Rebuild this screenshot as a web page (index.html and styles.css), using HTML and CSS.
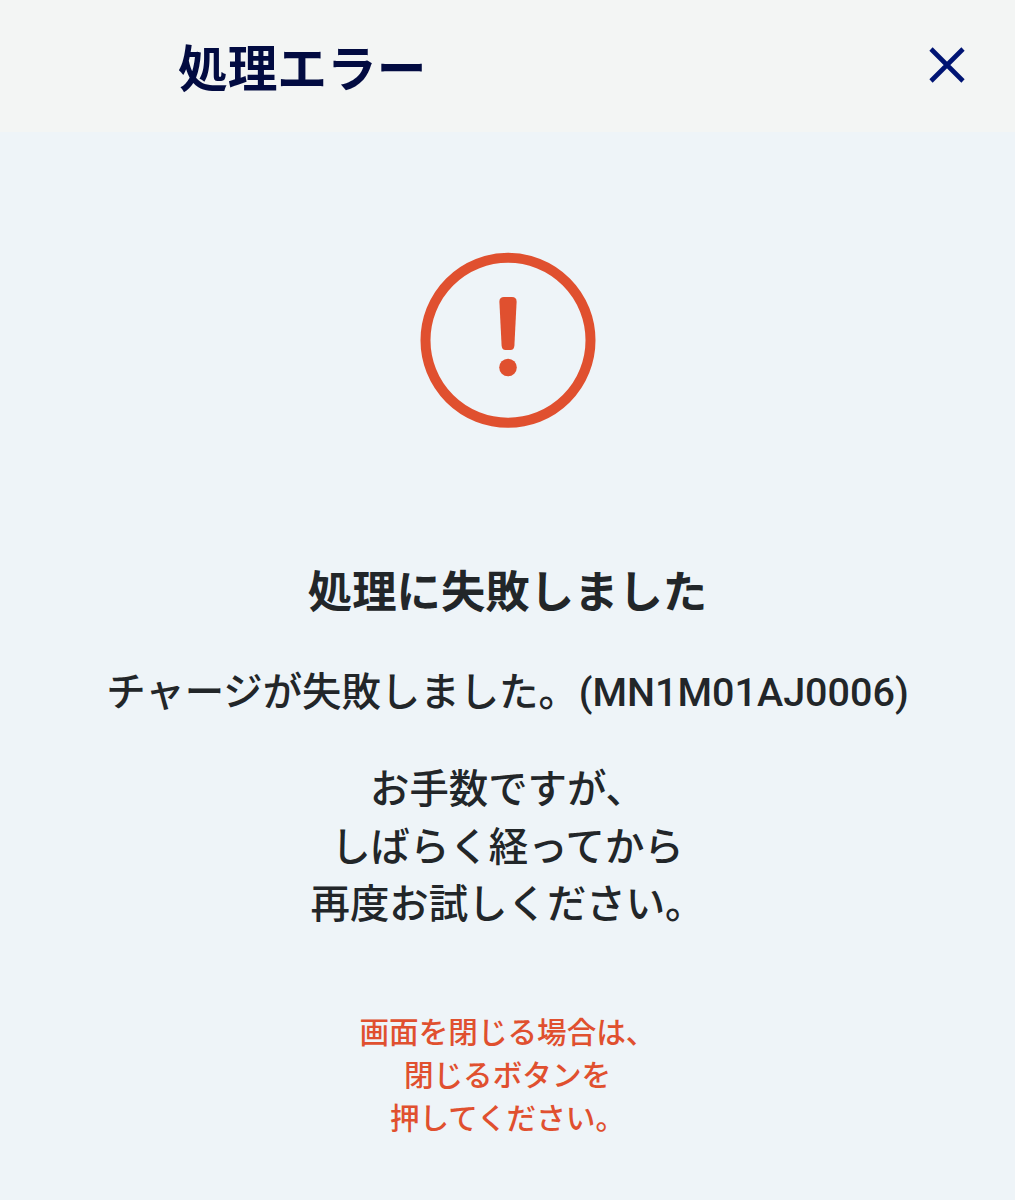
FILE: index.html
```html
<!DOCTYPE html>
<html lang="ja">
  <head>
    <meta charset="UTF-8" />
    <meta name="viewport" content="width=device-width, initial-scale=1.0" />
    <title>処理エラー</title>
    <link rel="stylesheet" href="styles.css">
  </head>
  <body>
    <header class="header">
      <h1 class="header-title">処理エラー</h1>
      <button class="close-btn" aria-label="閉じる">
        <svg class="close-icon" viewBox="0 0 36 36">
          <path d="M2 2 L34 34 M34 2 L2 34" />
        </svg>
      </button>
    </header>
    <main class="content">
      <svg class="error-icon" viewBox="0 0 176 176">
        <circle class="error-ring" cx="88" cy="88.3" r="82.5" />
        <path class="error-mark" d="M84 45 H92 Q96.800 45 96.6 50 L94.4 93.5 Q94 98 90.5 98 H85.5 Q82 98 81.6 93.5 L79.4 50 Q79.2 45 84 45 Z" />
        <circle class="error-mark" cx="88" cy="115.5" r="8.8" />
      </svg>
      <h2 class="error-title">処理に失敗しました</h2>
      <p class="error-detail">チャージが失敗しました。<span class="error-code">(MN1M01AJ0006)</span></p>
      <p class="error-guide">お手数ですが、<br>しばらく経ってから<br>再度お試しください。</p>
      <p class="close-note">画面を閉じる場合は、<br>閉じるボタンを<br>押してください。</p>
    </main>
  </body>
</html>
```
FILE: styles.css
```css
* {
  margin: 0;
  padding: 0;
  box-sizing: border-box;
}
body {
  font-family: Roboto, "Noto Sans CJK JP", sans-serif;
  font-weight: 500;
  background: #eef4f8;
  color: #222629;
  min-height: 100vh;
}
.header {
  display: flex;
  align-items: center;
  justify-content: space-between;
  height: 132px;
  padding: 0 50px 0 178px;
  background: #f3f5f4;
}
.header-title {
  padding-top: 8px;
  font-size: 49.7px;
  font-weight: 700;
  line-height: 72px;
  color: #020b41;
}
.close-btn {
  border: none;
  background: none;
  cursor: pointer;
}
.close-icon {
  display: block;
  width: 36px;
  height: 36px;
  margin-bottom: 2px;
  fill: none;
  stroke: #001473;
  stroke-width: 4.6;
}
.content {
  display: flex;
  flex-direction: column;
  align-items: center;
  padding-top: 120px;
  text-align: center;
}
.error-icon {
  width: 176px;
  height: 176px;
}
.error-ring {
  fill: none;
  stroke: #e0502f;
  stroke-width: 10;
}
.error-mark {
  fill: #e0502f;
}
.error-title {
  margin-top: 132px;
  font-size: 44.4px;
  font-weight: 700;
  line-height: 66px;
}
.error-detail {
  margin-top: 38px;
  font-size: 39.4px;
  line-height: 58px;
}
.error-code {
  margin-left: 1px;
  font-size: 39.5px;
}
.error-guide {
  margin-top: 39px;
  font-size: 39.4px;
  line-height: 57.6px;
}
.close-note {
  margin-top: 78px;
  font-size: 29.6px;
  line-height: 43.2px;
  color: #e0502f;
}
```
